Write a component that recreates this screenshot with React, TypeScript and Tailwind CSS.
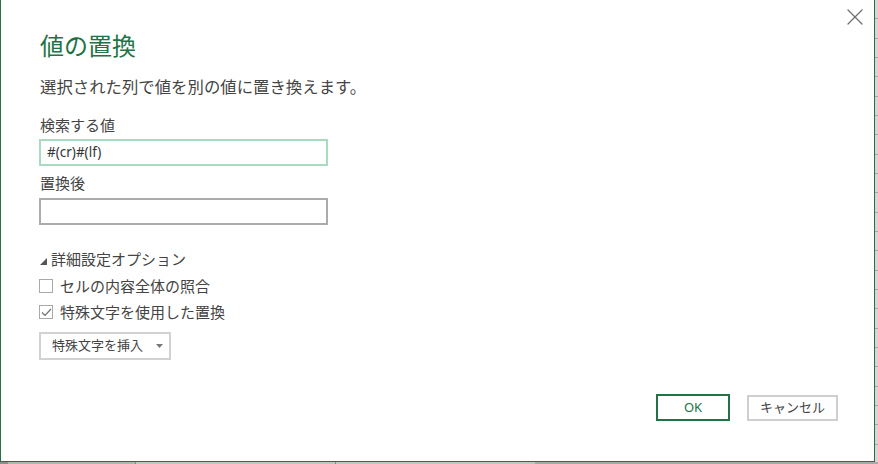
import { X } from "lucide-react";

const FONT = { fontFamily: '"Segoe UI", "Noto Sans", "Noto Sans CJK JP", sans-serif' };

function Checkbox({ checked, label }: { checked?: boolean; label: string }) {
  return (
    <label className="flex h-[26px] items-center gap-[7px] text-[15px] text-[#444]">
      <span className="flex h-[14px] w-[14px] items-center justify-center border border-[#a9a9a9] bg-white">
        {checked && (
          <svg width="11" height="9" viewBox="0 0 11 9" aria-hidden>
            <path d="M1 4.5 L4 7.5 L10 1" fill="none" stroke="#707070" strokeWidth="1.2" />
          </svg>
        )}
      </span>
      <span>{label}</span>
    </label>
  );
}

export default function App() {
  return (
    <div className="relative h-[464px] w-[878px] overflow-hidden bg-[#b9b9b9]" style={FONT}>
      {/* excel grid peeking out behind the dialog */}
      <div className="absolute right-0 top-0 flex h-full w-[3px] flex-col bg-[#d6d6d6]">
        {Array.from({ length: 24 }).map((_, i) => (
          <div key={i} className="h-[20px] border-b border-[#a8a8a8]" />
        ))}
      </div>
      <div className="absolute bottom-0 left-0 flex h-[2px] w-full bg-[#a9a9a9]">
        <div className="w-[8px] bg-[#8e8e8e]" />
        <div className="w-[127px] bg-[#b0b6b0]" />
        <div className="w-[200px] border-l border-[#8a8a8a] bg-[#c3c3c3]" />
        <div className="w-[200px] border-l border-[#8a8a8a] bg-[#c3c3c3]" />
      </div>

      <div className="relative flex h-[462px] w-[875px] flex-col border border-t-0 border-[#217346] bg-white pl-[38px]">
        <button className="absolute right-[5px] top-[3px] text-[#6f6f6f]" aria-label="閉じる">
          <X size={28} strokeWidth={1.1} />
        </button>

        <h1 className="mt-[30px] pl-[1px] text-[24px] leading-[32px] font-normal text-[#217346]">値の置換</h1>
        <p className="mt-[14px] pl-[1px] text-[16.4px] leading-[22px] text-[#444]">
          選択された列で値を別の値に置き換えます。
        </p>

        <div className="mt-[17px] pl-[1px] text-[15px] leading-[20px] text-[#444]">検索する値</div>
        <div className="mt-[4px] flex h-[27px] w-[289px] items-center border-2 border-[#a8dbbf] px-[6px] text-[13.5px] text-[#333]">
          #(cr)#(lf)
        </div>

        <div className="mt-[7px] pl-[1px] text-[15px] leading-[20px] text-[#444]">置換後</div>
        <div className="mt-[5px] h-[27px] w-[289px] border-2 border-[#ababab]" />

        <div className="mt-[24px] flex h-[20px] items-center pl-[1px] text-[15px] text-[#444]">
          <svg width="7" height="7" viewBox="0 0 7 7" className="mr-[4px] mt-[4px]" aria-hidden>
            <path d="M7 0 L7 7 L0 7 Z" fill="#555" />
          </svg>
          詳細設定オプション
        </div>

        <div className="mt-[4px] flex flex-col">
          <Checkbox label="セルの内容全体の照合" />
          <Checkbox checked label="特殊文字を使用した置換" />
        </div>

        <button className="mt-[7px] flex h-[28px] w-[132px] items-center border-2 border-[#d2d2d2] pl-[11px] text-[13px] text-[#444]">
          特殊文字を挿入
          <svg width="7" height="4" viewBox="0 0 7 4" className="ml-[13px]" aria-hidden>
            <path d="M0 0 L7 0 L3.5 4 Z" fill="#777" />
          </svg>
        </button>

        <div className="mt-[34px] mr-[36px] flex justify-end gap-[17px]">
          <button className="h-[27px] w-[74px] border-2 border-[#217346] text-[13px] text-[#217346]">OK</button>
          <button className="mt-[1px] h-[26px] w-[91px] border-2 border-[#cfcfcf] text-[13px] text-[#444]">
            キャンセル
          </button>
        </div>
      </div>
    </div>
  );
}
